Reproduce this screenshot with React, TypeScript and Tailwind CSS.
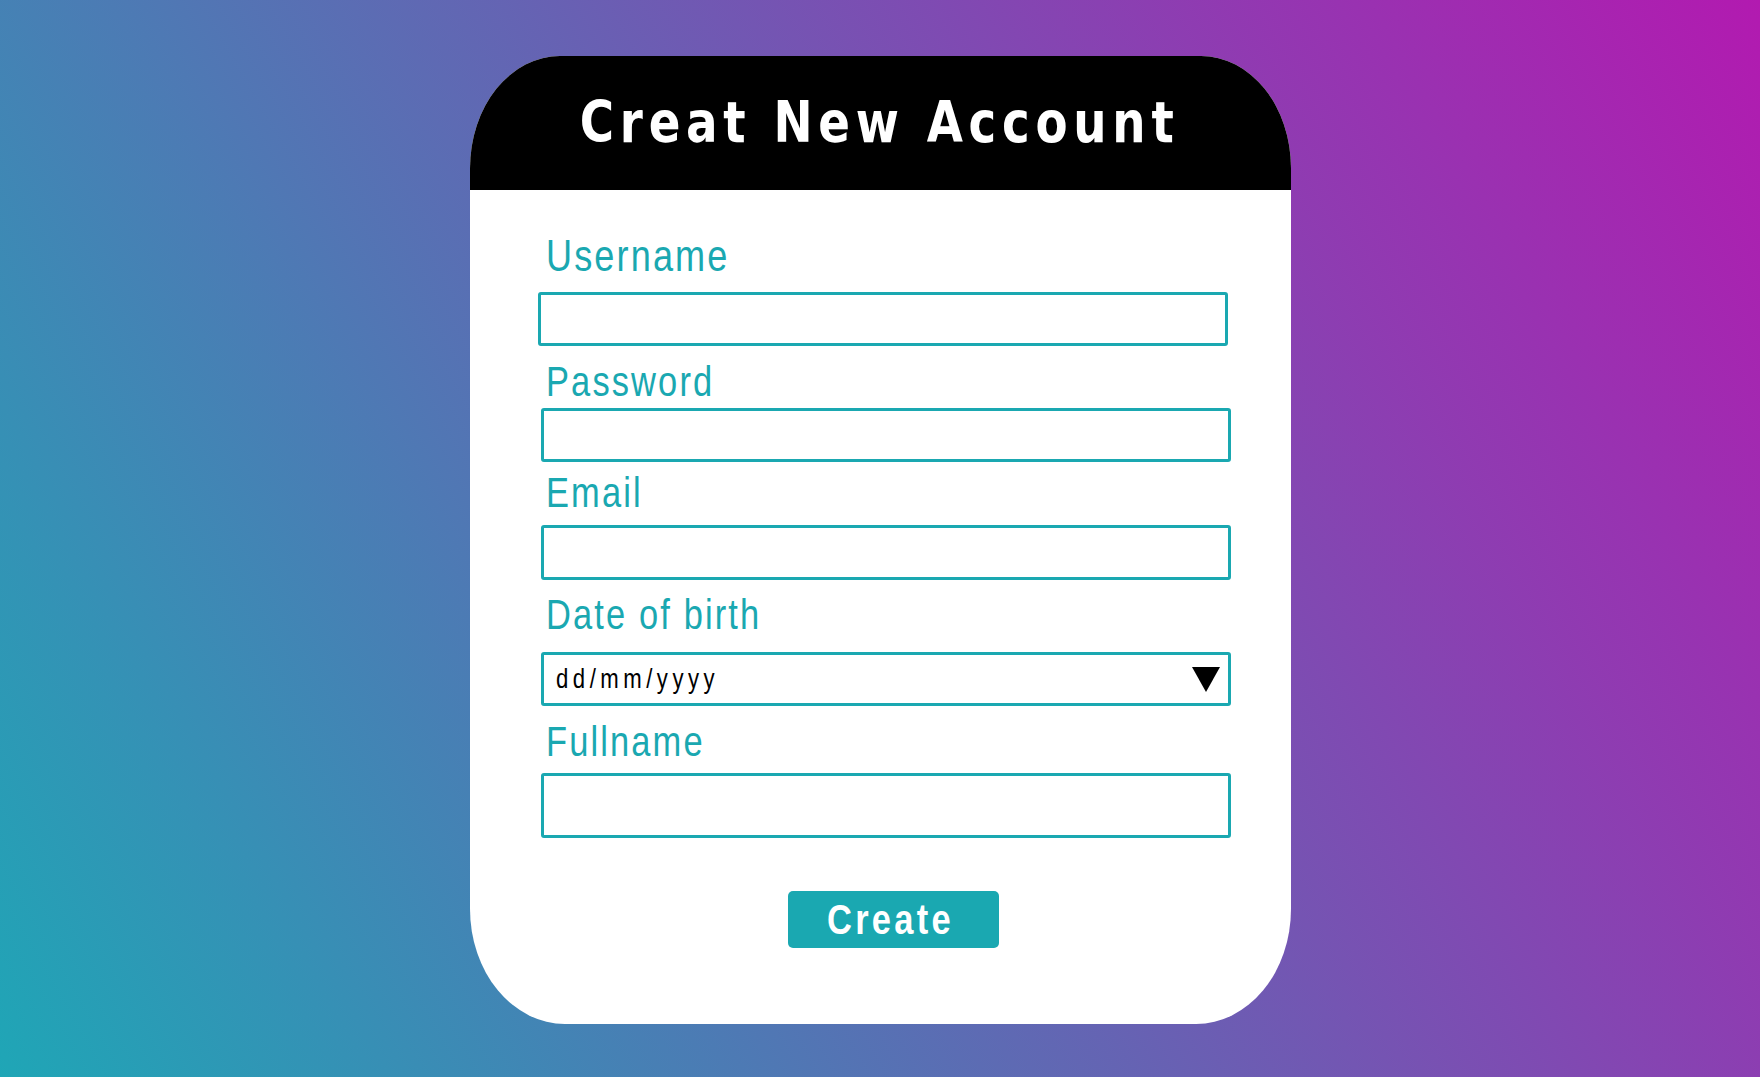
const fields = [
  { label: "Username", labelCls: "mt-[44px] text-[44px] leading-[44px]", boxCls: "mt-[14px] h-[54px] -ml-[3px]" },
  { label: "Password", labelCls: "mt-[15px] text-[42px] leading-[42px]", boxCls: "mt-[5px] h-[54px]" },
  { label: "Email", labelCls: "mt-[10px] text-[42px] leading-[42px]", boxCls: "mt-[11px] h-[55px]" },
  { label: "Date of birth", labelCls: "mt-[14px] text-[42px] leading-[42px]", boxCls: "mt-[16px] h-[54px]", date: true },
  { label: "Fullname", labelCls: "mt-[15px] text-[42px] leading-[42px]", boxCls: "mt-[10px] h-[65px]" },
];

// narrow look: Liberation Sans squeezed, since no narrow face is installed
const narrow = "font-['Liberation_Sans_Narrow','Liberation_Sans',sans-serif] inline-block origin-left scale-x-[0.82]";

function Field({ label, labelCls, boxCls, date }: { label: string; labelCls: string; boxCls: string; date?: boolean }) {
  return (
    <>
      <label className={`ml-[5px] tracking-[2.6px] text-[#1aa8b1] whitespace-nowrap ${narrow} ${labelCls}`}>
        {label}
      </label>
      {date ? (
        <div className={`w-[690px] border-[3px] border-[#1aa8b1] rounded-[3px] flex items-center justify-between pl-[12px] pr-[8px] ${boxCls}`}>
          <span className={`text-[27px] tracking-[5.5px] text-black whitespace-nowrap ${narrow}`}>dd/mm/yyyy</span>
          <svg width="28" height="25" viewBox="0 0 28 25">
            <polygon points="0,0 28,0 14,25" fill="#000" />
          </svg>
        </div>
      ) : (
        <input
          type={label === "Password" ? "password" : "text"}
          className={`block w-[690px] border-[3px] border-[#1aa8b1] rounded-[3px] bg-white outline-none px-3 text-[24px] ${boxCls}`}
        />
      )}
    </>
  );
}

export default function App() {
  return (
    <div className="h-[1077px] w-full bg-[linear-gradient(60deg,#1fa6b6,#b21ab0)] pt-[56px]">
      <div className="mx-auto w-[821px] h-[968px] bg-white overflow-hidden rounded-tl-[90px_112px] rounded-tr-[90px_112px] rounded-bl-[95px_115px] rounded-br-[95px_115px] flex flex-col">
        {/* header */}
        <div className="h-[134px] bg-black flex items-center justify-center shrink-0">
          <h1 className="text-white text-[57px] font-bold tracking-[7px] whitespace-nowrap scale-x-[0.82] font-['DejaVu_Sans',sans-serif]">
            Creat New Account
          </h1>
        </div>

        <form className="flex flex-col items-start pl-[71px]" onSubmit={(e) => e.preventDefault()}>
          {fields.map((f) => (
            <Field key={f.label} {...f} />
          ))}
          <button
            type="submit"
            className="mt-[53px] ml-[247px] w-[211px] h-[57px] rounded-[5px] bg-[#1aa8b1] flex items-center pl-[39px]"
          >
            <span className={`text-white text-[42px] font-bold tracking-[4px] leading-none whitespace-nowrap ${narrow}`}>Create</span>
          </button>
        </form>
      </div>
    </div>
  );
}
